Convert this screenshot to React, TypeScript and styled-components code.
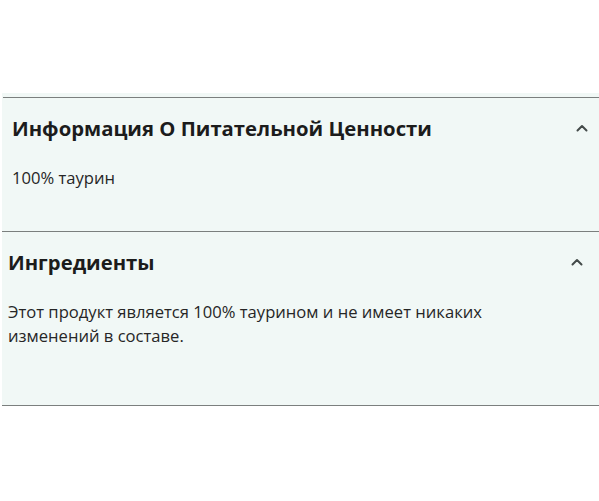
import styled, { createGlobalStyle } from "styled-components";

const GlobalStyle = createGlobalStyle`
  body {
    margin: 0;
    background: #ffffff;
    font-family: "Open Sans", "Noto Sans", sans-serif;
  }
`;

type Item = {
  title: string;
  text: string;
  inset: number;
  padLeft: number;
  padRight: number;
  padBottom: number;
};

const items: Item[] = [
  {
    title: "Информация О Питательной Ценности",
    text: "100% таурин",
    inset: 3,
    padLeft: 9,
    padRight: 11,
    padBottom: 41,
  },
  {
    title: "Ингредиенты",
    text: "Этот продукт является 100% таурином и не имеет никаких изменений в составе.",
    inset: 2,
    padLeft: 6,
    padRight: 16,
    padBottom: 57,
  },
];

const Chevron = () => (
  <svg width="12" height="8" viewBox="0 0 12 8" fill="none">
    <path d="M1.5 6.5 L6 2 L10.5 6.5" stroke="#444b4a" strokeWidth="2" strokeLinecap="round" strokeLinejoin="round" />
  </svg>
);

const App = () => {
  return (
    <>
      <GlobalStyle />
      <StyledAccordion>
        {items.map((item) => (
          <StyledSection key={item.title} $inset={item.inset} $padLeft={item.padLeft} $padRight={item.padRight} $padBottom={item.padBottom}>
            <StyledHeader>
              <StyledTitle>{item.title}</StyledTitle>
              <Chevron />
            </StyledHeader>
            <StyledBody>{item.text}</StyledBody>
          </StyledSection>
        ))}
      </StyledAccordion>
    </>
  );
};

const StyledAccordion = styled.div`
  margin-top: 93px;
  padding-top: 4px;
  background: #f1f8f6;
  border-bottom: 1px solid #7b7f7e;
  margin-left: 2px;
`;

const StyledSection = styled.section<{ $inset: number; $padLeft: number; $padRight: number; $padBottom: number }>`
  margin-left: ${(p) => p.$inset - 2}px;
  border-top: 1px solid #7b7f7e;
  padding: 0 ${(p) => p.$padRight}px ${(p) => p.$padBottom}px ${(p) => p.$padLeft}px;
`;

const StyledHeader = styled.div`
  display: flex;
  align-items: center;
  justify-content: space-between;
  padding: 15px 0 16px;
  line-height: 30px;
`;

const StyledTitle = styled.h2`
  margin: 0;
  font-size: 20.3px;
  font-weight: 700;
  color: #1c1c1c;
`;

const StyledBody = styled.p`
  margin: 7px 0 0;
  max-width: 500px;
  font-size: 16.6px;
  line-height: 24px;
  color: #262626;
`;

export default App;
